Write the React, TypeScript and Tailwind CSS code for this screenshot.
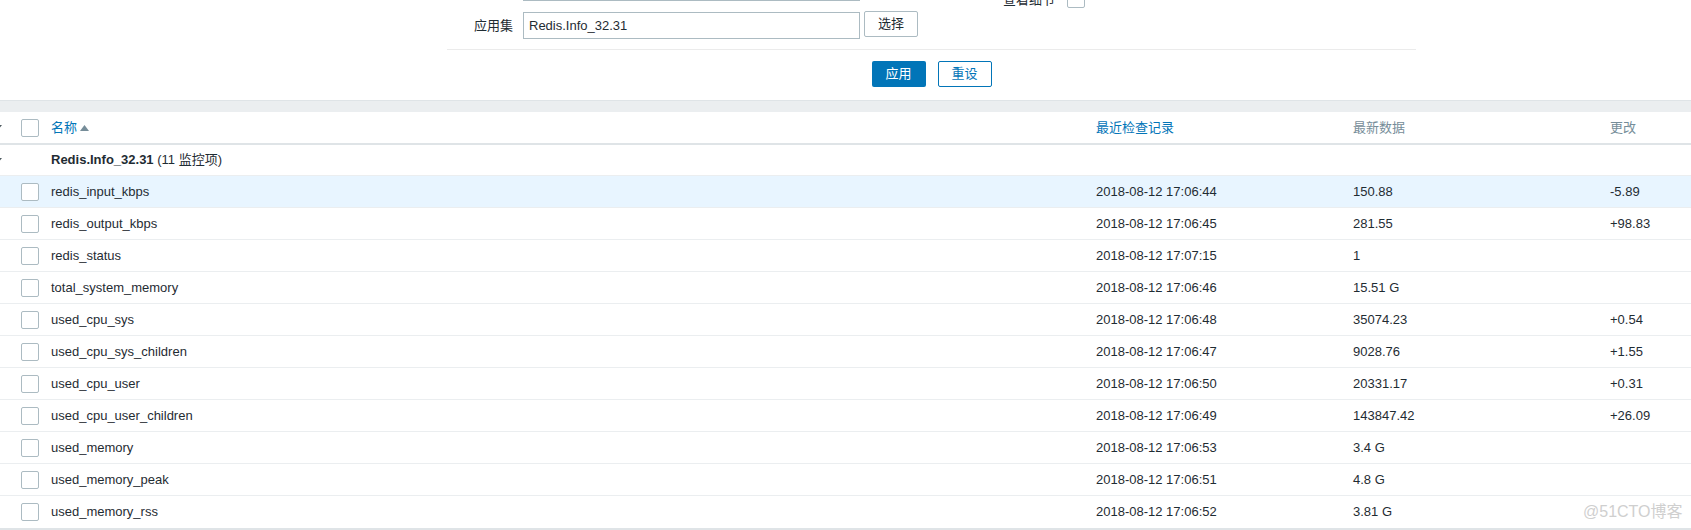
import React from "react";

const rows: [string, string, string, string][] = [
  ["redis_input_kbps", "2018-08-12 17:06:44", "150.88", "-5.89"],
  ["redis_output_kbps", "2018-08-12 17:06:45", "281.55", "+98.83"],
  ["redis_status", "2018-08-12 17:07:15", "1", ""],
  ["total_system_memory", "2018-08-12 17:06:46", "15.51 G", ""],
  ["used_cpu_sys", "2018-08-12 17:06:48", "35074.23", "+0.54"],
  ["used_cpu_sys_children", "2018-08-12 17:06:47", "9028.76", "+1.55"],
  ["used_cpu_user", "2018-08-12 17:06:50", "20331.17", "+0.31"],
  ["used_cpu_user_children", "2018-08-12 17:06:49", "143847.42", "+26.09"],
  ["used_memory", "2018-08-12 17:06:53", "3.4 G", ""],
  ["used_memory_peak", "2018-08-12 17:06:51", "4.8 G", ""],
  ["used_memory_rss", "2018-08-12 17:06:52", "3.81 G", ""],
];

function Box() {
  return <div className="w-[18px] h-[18px] border border-[#acbbc2] rounded-[2px] bg-white shrink-0" />;
}

function EdgeMark() {
  return (
    <svg width="8" height="5" viewBox="0 0 8 5" className="-ml-[6px] shrink-0">
      <path d="M0 0 L8 0 L4 5 Z" fill="#4f5b61" />
    </svg>
  );
}

export default function App() {
  return (
    <div
      className="relative w-[1691px] h-[530px] overflow-hidden bg-white text-[13px] text-[#1f2c33]"
      style={{ fontFamily: '"Liberation Sans", Arial, "Noto Sans CJK SC", sans-serif' }}
    >
      {/* Filter form */}
      <div className="h-[100px] flow-root">
        <div className="ml-[447px] w-[969px]">
          {/* Row A (cut off) */}
          <div className="-mt-[26px] h-[27px] flex">
            <div className="w-[76px] shrink-0" />
            <div className="w-[337px] h-[27px] border border-[#acbbc2] bg-white shrink-0" />
            <div className="ml-[143px] flex items-start">
              <span className="mt-[19px] leading-[14px] whitespace-nowrap">查看细节</span>
              <div className="ml-[12px] mt-[16px] w-[18px] h-[18px] border border-[#acbbc2] rounded-[2px] bg-white" />
            </div>
          </div>
          {/* Row B */}
          <div className="mt-[11px] h-[27px] flex items-start">
            <div className="w-[66px] h-[27px] flex items-center justify-end shrink-0 whitespace-nowrap">应用集</div>
            <div className="ml-[10px] w-[337px] h-[27px] border border-[#acbbc2] bg-white flex items-center px-[5px] shrink-0">
              Redis.Info_32.31
            </div>
            <div className="ml-[4px] -mt-[1px] w-[54px] h-[26px] border border-[#acbbc2] rounded-[2px] bg-white flex items-center justify-center shrink-0">
              选择
            </div>
          </div>
          <div className="mt-[10px] h-px bg-[#ebebeb]" />
          <div className="mt-[11px] flex justify-center gap-[12px]">
            <div className="w-[54px] h-[26px] rounded-[2px] bg-[#0275b8] text-white flex items-center justify-center">应用</div>
            <div className="w-[54px] h-[26px] rounded-[2px] border border-[#0275b8] text-[#0275b8] bg-white flex items-center justify-center">重设</div>
          </div>
        </div>
      </div>

      {/* gray band */}
      <div className="h-[12px] bg-[#ebeef0] border-t border-[#dfe4e7]" />

      {/* Table header */}
      <div className="h-[33px] flex items-center border-b-2 border-[#dfe4e7]">
        <div className="w-[51px] flex items-center shrink-0">
          <EdgeMark />
          <div className="ml-[19px]">
            <Box />
          </div>
        </div>
        <div className="w-[1045px] flex items-center shrink-0 text-[#0275b8]">
          名称
          <svg width="9" height="6" viewBox="0 0 9 6" className="ml-[3px]">
            <path d="M0 6 L4.5 0 L9 6 Z" fill="#768d99" />
          </svg>
        </div>
        <div className="w-[257px] shrink-0 text-[#0275b8]">最近检查记录</div>
        <div className="w-[257px] shrink-0 text-[#768d99]">最新数据</div>
        <div className="flex-1 text-[#768d99]">更改</div>
      </div>

      {/* Group row */}
      <div className="h-[31px] flex items-center border-b border-[#ebeef0]">
        <div className="w-[51px] flex items-center shrink-0">
          <EdgeMark />
        </div>
        <div>
          <span className="font-bold">Redis.Info_32.31</span> (11 监控项)
        </div>
      </div>

      {/* Data rows */}
      {rows.map((r, i) => (
        <div
          key={r[0]}
          className={
            "h-[32px] flex items-center " +
            (i === 0 ? "bg-[#e8f5ff] " : "") +
            (i === rows.length - 1 ? "border-b-0" : "border-b border-[#ebeef0]")
          }
        >
          <div className="w-[51px] pl-[21px] shrink-0">
            <Box />
          </div>
          <div className="w-[1045px] shrink-0">{r[0]}</div>
          <div className="w-[257px] shrink-0">{r[1]}</div>
          <div className="w-[257px] shrink-0">{r[2]}</div>
          <div className="flex-1">{r[3]}</div>
        </div>
      ))}
      <div className="h-[2px] bg-[#dfe4e7]" />

      {/* watermark */}
      <div className="absolute left-[1583px] top-[502px] text-[16px] text-[#cfcfcf] whitespace-nowrap leading-[20px]">
        @51CTO博客
      </div>
    </div>
  );
}
